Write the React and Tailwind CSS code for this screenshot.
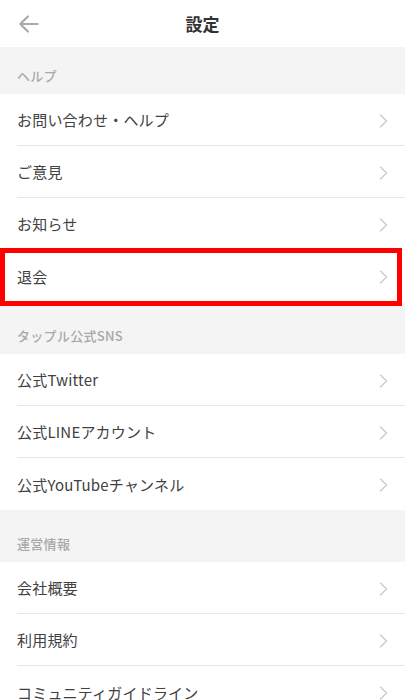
const sections = [
  {
    title: 'ヘルプ',
    first: true,
    items: ['お問い合わせ・ヘルプ', 'ご意見', 'お知らせ', '退会'],
  },
  {
    title: 'タップル公式SNS',
    items: ['公式Twitter', '公式LINEアカウント', '公式YouTubeチャンネル'],
  },
  {
    title: '運営情報',
    items: ['会社概要', '利用規約', 'コミュニティガイドライン'],
  },
];

const Chevron = () => (
  <svg width="10" height="16" viewBox="0 0 10 16" fill="none" stroke="#cdcdd1" strokeWidth="1.5" strokeLinecap="round" strokeLinejoin="round">
    <path d="M2.5 2l6 6-6 6" />
  </svg>
);

const Row = ({ label, last, highlight }) => (
  <div className="relative h-[52px] bg-white pl-[17px]">
    <div className={`flex h-full items-center justify-between pr-[17px] pt-[2px] ${last ? '' : 'border-b border-[#e6e6e6]'}`}>
      <span className="text-[15px] tracking-[0.2px] text-[#414141]">{label}</span>
      <Chevron />
    </div>
    {highlight && (
      <div className="pointer-events-none absolute left-0 right-[3px] -top-[2px] -bottom-[4px] border-[5px] border-[#ff0000]" />
    )}
  </div>
);

export default function App() {
  return (
    <div className="min-h-screen w-[405px] bg-[#f4f4f4] font-['Noto_Sans_CJK_JP','Noto_Sans',sans-serif]">
      {/* Header */}
      <div className="relative flex h-[47px] items-center justify-center bg-white">
        <button className="absolute left-[16px] top-[11px] text-[#a7a9ad]">
          <svg width="26" height="26" viewBox="0 0 24 24" fill="none" stroke="currentColor" strokeWidth="2" strokeLinecap="round" strokeLinejoin="round">
            <path d="M20 12H4M11 5l-7 7 7 7" />
          </svg>
        </button>
        <h1 className="text-[17px] font-bold text-[#333]">設定</h1>
      </div>

      {sections.map((s) => (
        <div key={s.title}>
          <div className={`flex items-end px-[17px] ${s.first ? 'h-[47px] pb-[9px]' : 'h-[52px] pb-[9px]'}`}>
            <span className="text-[13px] font-medium tracking-[0.3px] text-[#a8a8ad]">{s.title}</span>
          </div>
          {s.items.map((it, i) => (
            <Row key={it} label={it} last={i === s.items.length - 1} highlight={it === '退会'} />
          ))}
        </div>
      ))}
    </div>
  );
}
